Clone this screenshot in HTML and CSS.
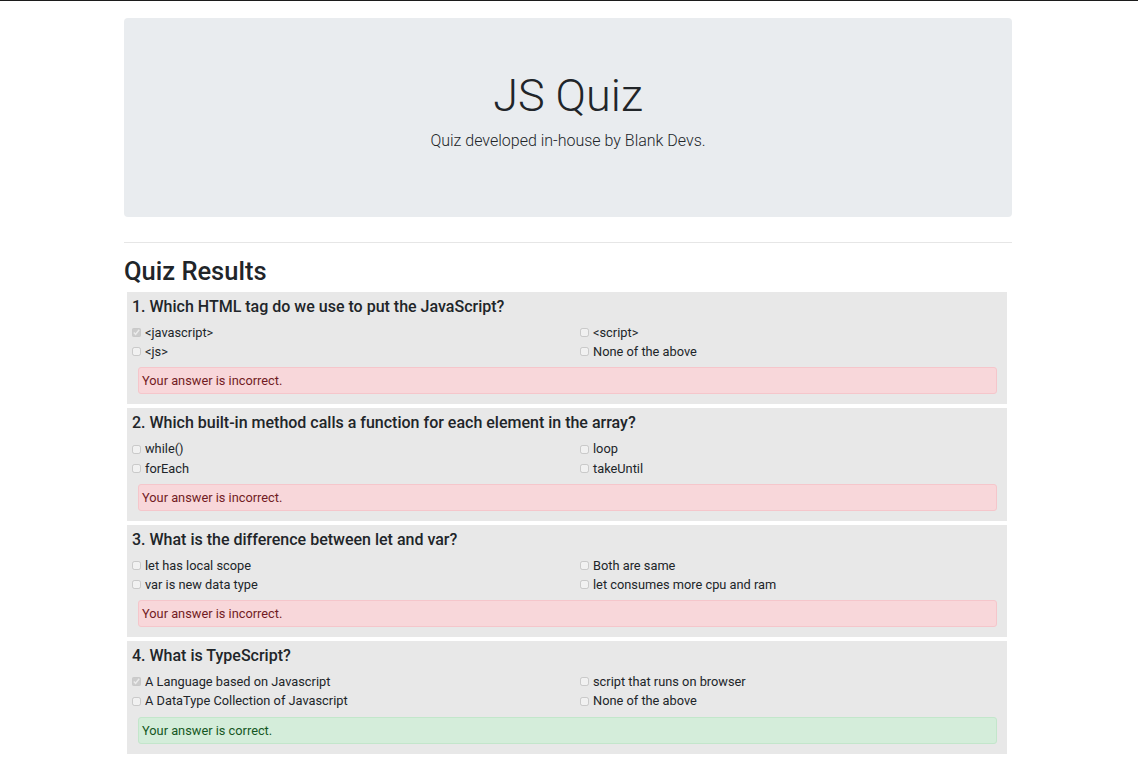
FILE: index.html
```html
<!DOCTYPE html>
<html lang="en">
<head>
<meta charset="utf-8">
<title>JS Quiz</title>
<link rel="stylesheet" href="styles.css">
</head>
<body>
<div class="container">
  <header class="jumbotron">
    <h1 class="title">JS Quiz</h1>
    <p class="lead">Quiz developed in-house by Blank Devs.</p>
  </header>
  <hr class="divider">
  <h2 class="results-title">Quiz Results</h2>

  <section class="question">
    <h3 class="q-title">1. Which HTML tag do we use to put the JavaScript?</h3>
    <div class="options">
      <label class="option"><input type="checkbox" disabled checked>&lt;javascript&gt;</label>
      <label class="option"><input type="checkbox" disabled>&lt;script&gt;</label>
      <label class="option"><input type="checkbox" disabled>&lt;js&gt;</label>
      <label class="option"><input type="checkbox" disabled>None of the above</label>
    </div>
    <div class="alert alert-danger">Your answer is incorrect.</div>
  </section>

  <section class="question">
    <h3 class="q-title">2. Which built-in method calls a function for each element in the array?</h3>
    <div class="options">
      <label class="option"><input type="checkbox" disabled>while()</label>
      <label class="option"><input type="checkbox" disabled>loop</label>
      <label class="option"><input type="checkbox" disabled>forEach</label>
      <label class="option"><input type="checkbox" disabled>takeUntil</label>
    </div>
    <div class="alert alert-danger">Your answer is incorrect.</div>
  </section>

  <section class="question">
    <h3 class="q-title">3. What is the difference between let and var?</h3>
    <div class="options">
      <label class="option"><input type="checkbox" disabled>let has local scope</label>
      <label class="option"><input type="checkbox" disabled>Both are same</label>
      <label class="option"><input type="checkbox" disabled>var is new data type</label>
      <label class="option"><input type="checkbox" disabled>let consumes more cpu and ram</label>
    </div>
    <div class="alert alert-danger">Your answer is incorrect.</div>
  </section>

  <section class="question">
    <h3 class="q-title">4. What is TypeScript?</h3>
    <div class="options">
      <label class="option"><input type="checkbox" disabled checked>A Language based on Javascript</label>
      <label class="option"><input type="checkbox" disabled>script that runs on browser</label>
      <label class="option"><input type="checkbox" disabled>A DataType Collection of Javascript</label>
      <label class="option"><input type="checkbox" disabled>None of the above</label>
    </div>
    <div class="alert alert-success">Your answer is correct.</div>
  </section>
</div>
</body>
</html>
```
FILE: styles.css
```css
html {
  border-top: 1px solid #1c1c1c;
}
body {
  margin: 0;
  padding: 0 2px 0 0;
  font-family: Roboto, "Liberation Sans", Arial, sans-serif;
  color: #212529;
  background: #fff;
}
.container {
  width: 888px;
  margin: 0 auto;
}
.jumbotron {
  margin-top: 17px;
  height: 199px;
  box-sizing: border-box;
  background: #e9ecef;
  border-radius: 4px;
  text-align: center;
  padding-top: 46px;
}
.title {
  margin: 0;
  font-size: 45px;
  font-weight: 300;
  line-height: 64px;
  color: #212529;
}
.lead {
  margin: 1px 0 0;
  font-size: 16px;
  font-weight: 300;
  line-height: 24px;
  color: #212529;
}
.divider {
  margin: 25px 0 0;
  border: 0;
  border-top: 1px solid #e6e6e6;
  height: 0;
}
.results-title {
  margin: 11px 0 0;
  font-size: 25.5px;
  font-weight: 500;
  line-height: 34px;
  color: #212529;
}
.question {
  margin: 4px 5px 0 3px;
  background: #e8e8e8;
  padding: 3px 5px 10px 5px;
}
.q-title {
  margin: 0;
  font-size: 16px;
  font-weight: 500;
  line-height: 24px;
  color: #212529;
}
.options {
  margin-top: 4px;
  display: grid;
  grid-template-columns: 448px 1fr;
}
.option {
  display: flex;
  align-items: center;
  font-size: 12.8px;
  line-height: 19.2px;
  color: #212529;
}
.option input {
  width: 9px;
  height: 9px;
  margin: 0 4px 0 0;
}
.alert {
  margin: 6px 5px 0 6px;
  height: 27px;
  box-sizing: border-box;
  border: 1px solid transparent;
  border-radius: 3px;
  padding: 0 3px;
  font-size: 12.8px;
  line-height: 25px;
}
.alert-danger {
  background: #f8d7da;
  border-color: #f5c6cb;
  color: #721c24;
}
.alert-success {
  background: #d4edda;
  border-color: #c3e6cb;
  color: #155724;
}
```
